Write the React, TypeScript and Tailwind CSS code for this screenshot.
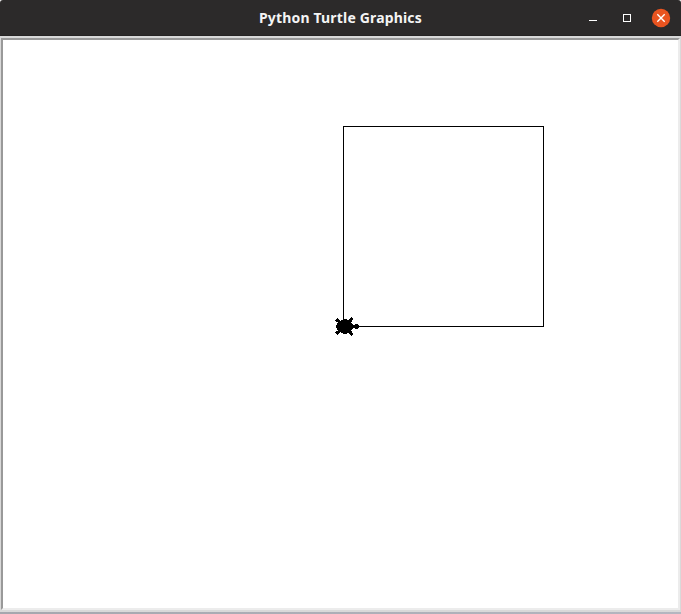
// Outline of the turtle cursor, heading east from its origin.
const TURTLE =
  "16,0 14,-2 10,-1 7,-4 9,-7 8,-9 5,-6 1,-7 -3,-5 -6,-8 -8,-6 -5,-4 -7,0 -5,4 -8,6 -6,8 -3,5 1,7 5,6 8,9 9,7 7,4 10,1 14,2";

function TitleBar() {
  return (
    <header className="grid h-9 shrink-0 grid-cols-[1fr_auto_1fr] items-center rounded-t-[3px] bg-[#2c2a2a] shadow-[inset_0_-1px_0_#262424]">
      <span />
      <h1 className="w-[163px] whitespace-nowrap font-['Noto_Sans',sans-serif] text-[14px] leading-5 font-bold tracking-[0.17px] text-[#f4f4f4]">
        Python Turtle Graphics
      </h1>
      <div className="flex items-center justify-end pr-[10px]">
        <button aria-label="Minimize" className="mr-[26px] h-2 w-2">
          <svg className="block" width="8" height="8" shapeRendering="crispEdges">
            <rect y="6" width="8" height="1" fill="#fff" />
          </svg>
        </button>
        <button aria-label="Maximize" className="mr-5 h-2 w-2 border border-white" />
        <button aria-label="Close" className="h-5 w-5">
          <svg className="block" width="20" height="20">
            <circle cx="10" cy="10" r="9.2" fill="#e95420" />
            <path d="M6.3 6.3l7.4 7.4M13.7 6.3l-7.4 7.4" stroke="#fff" strokeWidth="1.4" />
          </svg>
        </button>
      </div>
    </header>
  );
}

export default function App() {
  return (
    <div className="flex h-[614px] w-[681px] flex-col overflow-hidden bg-white">
      <TitleBar />
      <main className="min-h-0 flex-1 border-x border-y-2 border-[#d9d9d9]">
        <div className="h-full border-2 border-t-[#999999] border-r-[#ececec] border-b-[#ececec] border-l-[#999999] bg-white">
          <svg className="block" width="675" height="568" viewBox="3 40 675 568" shapeRendering="crispEdges">
            <rect x="343.5" y="126.5" width="200" height="200" fill="none" stroke="#000" />
            <polygon points={TURTLE} transform="translate(343.5 326.5)" fill="#000" stroke="#000" />
          </svg>
        </div>
      </main>
      <div className="h-0.5 shrink-0 bg-gradient-to-r from-[#a5a7ae] to-[#b4b6c0]" />
    </div>
  );
}
